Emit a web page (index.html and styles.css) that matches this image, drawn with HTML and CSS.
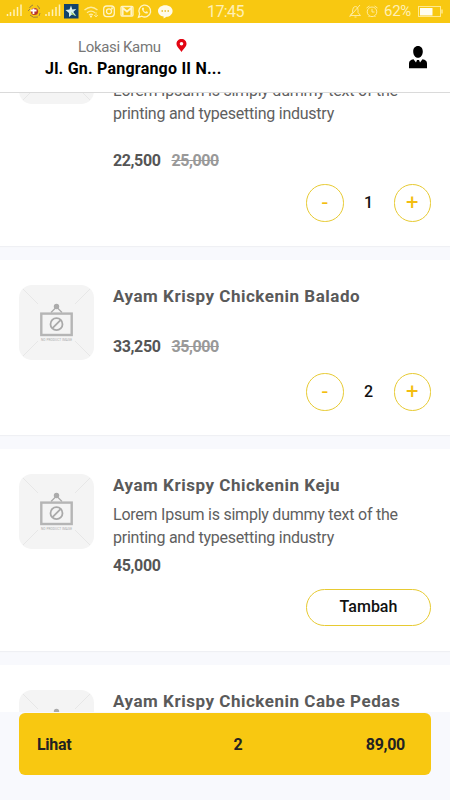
FILE: index.html
```html
<!DOCTYPE html>
<html lang="id">
<head>
<meta charset="utf-8">
<title>Ayam Krispy</title>
<link rel="stylesheet" href="styles.css">
</head>
<body>
<svg class="defs" width="0" height="0">
  <symbol id="thumb" viewBox="0 0 75 75">
    <rect width="75" height="75" rx="13" fill="#f4f4f4"/>
    <path d="M4 4L19 19M71 4L56 19M4 71L19 56M71 71L56 56" stroke="#e7e7e7" stroke-width="1"/>
    <circle cx="37.5" cy="21.500" r="2.700" fill="#ababab"/>
    <path d="M32 27.500L37.500 22L43 27.500" fill="none" stroke="#ababab" stroke-width="1.300"/>
    <rect x="22.300" y="28.600" width="30.400" height="21.400" fill="#f4f4f4" stroke="#b5b5b5" stroke-width="2.400"/>
    <circle cx="37.500" cy="39.200" r="6" fill="none" stroke="#a9a9a9" stroke-width="1.800"/>
    <path d="M33.500 43.200L41.500 35.200" stroke="#a9a9a9" stroke-width="1.800"/>
    <text x="22" y="56" font-size="3.200" textLength="31" fill="#aaa">NO PRODUCT IMAGE</text>
  </symbol>
  <symbol id="signal" viewBox="0 0 17 13">
    <path d="M1.500 12V10M4.500 12V8M8 12V5.500M11.500 12V3M15 12V.5" stroke="#fff1b8" stroke-width="1.500"/>
  </symbol>
</svg>
<div class="screen">
  <div class="status">
    <svg class="status-icons" width="180" height="23" viewBox="0 0 180 23" fill="none" stroke="#fff4c6" stroke-width="1.300">
      <use href="#signal" x="6" y="4" width="17" height="13"/>
      <path d="M29.500 8Q31 5.500 33 5M37 5.500Q39.500 7 39.500 9M30 15Q33 18.500 38 17M28 11l2-2M40 13l-1 3" stroke="#9d8342" stroke-width="1"/>
      <circle cx="34.500" cy="11.500" r="3.600" fill="#b9352a" stroke="none"/>
      <path d="M33.500 8.500v5.500M30.500 10.500h6" stroke="#fff" stroke-width="1.800"/>
      <use href="#signal" x="44.500" y="4" width="17" height="13"/>
      <rect x="64" y="4" width="14.500" height="14.500" fill="#12436b" stroke="none"/>
      <path d="M71 5.500l1.300 4 4-.5-3 3 3 4-4.300-1.500L69 17v-4l-3.500-3 4-.5z" fill="#d9f2ef" stroke="none"/>
      <path d="M71 12l5 4-4-1.500z" fill="#91c34b" stroke="none"/>
      <path d="M84.500 10Q91 4.500 97.500 10M87 12.700Q91 9.500 95 12.700M89 15Q91 13.500 93 15" stroke="#ffec9e"/>
      <circle cx="91" cy="16.500" r="1" fill="#fff4c6" stroke="none"/>
      <path d="M96 12v5M94 15l2 2 2-2" stroke="#ffec9e" stroke-width=".8"/>
      <rect x="103.700" y="6" width="10.600" height="10.600" rx="3"/>
      <circle cx="109" cy="11.300" r="2.500"/>
      <circle cx="112" cy="8.400" r=".4"/>
      <rect x="121" y="6.500" width="12" height="9.500" rx="1"/>
      <path d="M122.700 15.500V8L127 11.500l4.300-3.500v7.500" stroke-width="1.800"/>
      <path d="M138.500 17.300l1.100-3.400a5.900 5.900 0 1 1 2.300 2.300z"/>
      <path d="M142 8q-.5 2 1.500 4t4 1.500l.5-1.500-1.700-.8-.8.800q-1.600-.7-2-2l.6-.9-.7-1.500z" fill="#fff4c6" stroke="none"/>
      <path d="M158 11c0-3.500 3.300-5.800 7.300-5.800s7.300 2.300 7.300 5.800-3.300 5.800-6 5.800l-3 1.800v-2c-3-.5-5.600-2.600-5.600-5.600z" fill="#fffbea" stroke="none"/>
      <path d="M161.500 11h1.500m1.500 0h1.500m1.500 0h1.500" stroke="#e8bc2a" stroke-width="1.500"/>
    </svg>
    <span class="clock">17:45</span>
    <svg class="status-right" width="32" height="23" viewBox="0 0 32 23" fill="none" stroke="#ffeb9c" stroke-width="1">
      <path d="M2 15.500h10.500L10 12.500q.5-6-2.500-6T4.500 12.500zM1.500 17L12 5M6.500 17h2"/>
      <circle cx="24" cy="11.800" r="4.800"/>
      <path d="M24 8.800v3.200h2.500M18.500 8l3-2M29.500 8l-3-2M20.500 17l1-1M27.500 17l-1-1"/>
    </svg>
    <span class="percent">62%</span>
    <svg class="battery" width="26" height="23" viewBox="0 0 26 23">
      <rect x=".5" y="6.500" width="22" height="10" fill="none" stroke="#ffe98f"/>
      <path d="M2 8h12.500v7.500H2z" fill="#fffdf0"/>
      <path d="M24 9.500v4" stroke="#ffe98f" stroke-width="1.500"/>
    </svg>
  </div>

  <header class="header">
    <div class="location">
      <div class="location-label"><span>Lokasi Kamu</span>
        <svg class="pin" width="11" height="13" viewBox="0 0 11 13"><path fill="#e30613" fill-rule="evenodd" d="M5.500 0C2.600 0 .5 2.100.5 4.800.5 8 4 10.500 5.500 13 7 10.500 10.500 8 10.500 4.800 10.500 2.100 8.400 0 5.500 0zm0 3a1.800 1.800 0 1 1 0 3.600 1.800 1.800 0 0 1 0-3.600z"/></svg>
      </div>
      <div class="address">Jl. Gn. Pangrango II N...</div>
    </div>
    <svg class="user" width="18" height="23" viewBox="0 0 18 23"><path d="M9 0c3 0 4.800 2.300 4.800 5.500S12 11.800 9 11.800 4.200 8.700 4.200 5.500 6 0 9 0zM0 22.300V17.500c0-2.600 1.500-3.500 4.500-4.200l2.500 3.200 1-2.500h2l1 2.500 2.500-3.200c3 .7 4.500 1.600 4.500 4.200v4.800z"/></svg>
  </header>

  <main class="list">
    <article class="card card-first">
      <svg class="thumb"><use href="#thumb"/></svg>
      <div class="info">
        <p class="desc">Lorem Ipsum is simply dummy text of the printing and typesetting industry</p>
        <div class="prices"><span>22,500</span><s>25,000</s></div>
        <div class="actions"><button class="round">-</button><span class="qty">1</span><button class="round">+</button></div>
      </div>
    </article>
    <article class="card card-short">
      <svg class="thumb"><use href="#thumb"/></svg>
      <div class="info">
        <h2 class="title">Ayam Krispy Chickenin Balado</h2>
        <div class="prices"><span>33,250</span><s>35,000</s></div>
        <div class="actions"><button class="round">-</button><span class="qty">2</span><button class="round">+</button></div>
      </div>
    </article>
    <article class="card card-full">
      <svg class="thumb"><use href="#thumb"/></svg>
      <div class="info">
        <h2 class="title">Ayam Krispy Chickenin Keju</h2>
        <p class="desc">Lorem Ipsum is simply dummy text of the printing and typesetting industry</p>
        <div class="prices"><span>45,000</span></div>
        <div class="actions"><button class="add">Tambah</button></div>
      </div>
    </article>
    <article class="card card-last">
      <svg class="thumb"><use href="#thumb"/></svg>
      <div class="info">
        <h2 class="title">Ayam Krispy Chickenin Cabe Pedas</h2>
      </div>
    </article>
  </main>

  <footer class="footer">
    <div class="cart"><span>Lihat</span><span class="cart-count">2</span><span class="cart-total">89,00</span></div>
  </footer>
</div>
</body>
</html>
```

FILE: styles.css
```css
* { box-sizing: border-box; }
body { margin: 0; font-family: Roboto, "Liberation Sans", sans-serif; }
.defs { display: block; }
.screen { width: 450px; height: 800px; display: flex; flex-direction: column; overflow: hidden; background: #f8f9fd; }

.status { height: 23px; flex: none; display: flex; align-items: center; background: #f8c811; color: #fff0b5; }
.status-icons { flex: none; }
.clock { width: 169px; padding-left: 27px; font-size: 16px; line-height: 23px; letter-spacing: -.6px; }
.status-right { flex: none; margin-left: -1px; }
.percent { width: 34px; margin-left: 4px; font-size: 15px; line-height: 23px; letter-spacing: -.3px; }
.battery { flex: none; }

.header { height: 70px; flex: none; display: flex; justify-content: space-between; padding: 14px 23px 0 45px; background: #fff; border-bottom: 1px solid #dadada; }
.location { width: 200px; }
.location-label { display: flex; align-items: center; padding-left: 33px; font-size: 15px; line-height: 20px; letter-spacing: -.35px; color: #777; }
.location-label span { width: 98px; }
.pin { margin-top: -3px; }
.address { font-size: 16px; font-weight: 700; line-height: 24px; letter-spacing: .22px; color: #000; white-space: nowrap; }
.user { margin-top: 9px; }

.list { height: 619px; flex: none; display: flex; flex-direction: column; gap: 14px; overflow: hidden; }
.card { flex: none; display: flex; gap: 19px; padding: 25px 19px 0; background: #fff; box-shadow: 0 1px 1px #eff0f4; }
.card-first { height: 242px; margin-top: -89px; }
.card-short { height: 175px; }
.card-full { height: 202px; }
.card-last { height: 202px; }
.thumb { width: 75px; height: 75px; flex: none; }
.info { flex: 1; }
.title { margin: 0; font-size: 17px; font-weight: 700; line-height: 23px; letter-spacing: .52px; color: #5a5a5a; white-space: nowrap; }
.desc { margin: 7px 0 0; font-size: 16px; line-height: 22.5px; letter-spacing: -.24px; color: #606060; }
.card-first .desc { margin-top: 51px; }
.prices { display: flex; gap: 11px; font-size: 16px; font-weight: 700; line-height: 22px; letter-spacing: -.4px; color: #555; margin-top: 6px; }
.prices s { color: #999; }
.card-first .prices { margin-top: 25px; }
.card-short .prices { margin-top: 28px; }
.actions { display: flex; justify-content: flex-end; align-items: center; margin-top: 12px; }
.card-short .actions { margin-top: 15px; }
.round { width: 38px; height: 38px; padding: 0; border: 1px solid #e7ca32; border-radius: 50%; background: #fff; color: #f3bd10; font: 400 22px/34px Roboto, sans-serif; }
.qty { width: 50px; text-align: center; font-size: 16px; font-weight: 500; color: #111; }
.actions .round:last-child, .actions .round:first-child { width: 37.5px; height: 37.5px; }
.add { width: 125px; height: 37px; padding: 0 0 2px; border: 1px solid #e7ca32; border-radius: 19px; background: #fff; color: #111; font: 500 16px/33px Roboto, sans-serif; }

.footer { flex: 1; padding: 1px 19px 0; background: #f8f9fd; }
.cart { height: 62px; display: grid; grid-template-columns: 1fr 20px 1fr; align-items: center; padding: 1px 26px 0 18px; border-radius: 6px; background: #f8c811; color: #222; font-size: 16px; font-weight: 700; letter-spacing: -.3px; }
.cart { grid-template-columns: 191px 20px 1fr; }
.cart-count { text-align: center; }
.cart-total { text-align: right; }
```
